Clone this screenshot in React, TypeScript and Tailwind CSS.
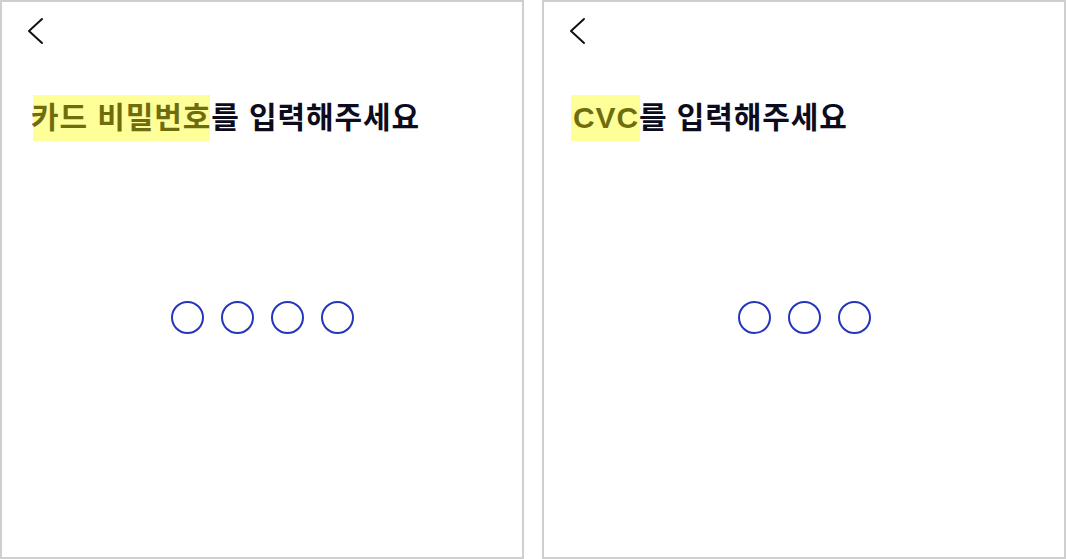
import React from "react";

type Step = {
    label: string;
    rest: string;
    digits: number;
    markClass: string;
};

const STEPS: Step[] = [
    { label: "카드 비밀번호", rest: "를 입력해주세요", digits: 4, markClass: "left-[2px] right-[1px]" },
    { label: "CVC", rest: "를 입력해주세요", digits: 3, markClass: "-left-[2px] -right-[1px]" },
];

function BackIcon() {
    return (
        <svg width="18" height="28" viewBox="0 0 18 28" fill="none">
            <polyline points="16,2 3,14 16,26" stroke="#111" strokeWidth="2" strokeLinecap="round" strokeLinejoin="round" />
        </svg>
    );
}

function PinPanel({ step }: { step: Step }) {
    return (
        <div className="w-[524px] h-[559px] shrink-0 border-2 border-[#cfcfcf] bg-white flex flex-col">
            <div className="pt-[15px] pl-[24px] h-[44px]">
                <BackIcon />
            </div>

            <h1 className="mt-[49px] pl-[29px] text-[30px] leading-[46px] font-bold text-[#0c0c1c] tracking-[0.9px] whitespace-nowrap">
                <span className="relative inline-block">
                    {step.label}
                    <span className={`absolute inset-y-0 bg-[rgba(255,255,0,0.4)] ${step.markClass}`} />
                </span>
                {step.rest}
            </h1>

            <div className="mt-[160px] flex justify-center gap-[17px]">
                {Array.from({ length: step.digits }).map((_, i) => (
                    <div key={i} className="w-[33px] h-[33px] rounded-full border-2 border-[#2636bb]" />
                ))}
            </div>
        </div>
    );
}

export default function App() {
    return (
        <div
            className="w-[1066px] h-[559px] bg-white flex gap-[18px]"
            style={{ fontFamily: '"Liberation Sans", "Noto Sans CJK KR", sans-serif' }}
        >
            {STEPS.map((step) => (
                <PinPanel key={step.label} step={step} />
            ))}
        </div>
    );
}
